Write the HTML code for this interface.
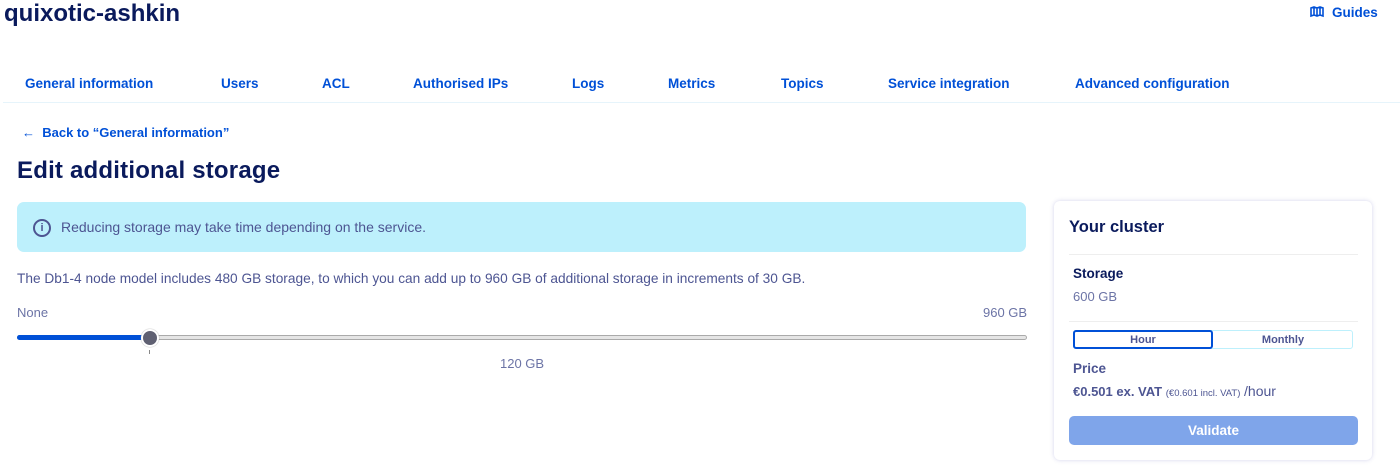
<!DOCTYPE html>
<html><head><meta charset="utf-8"><style>
*{margin:0;padding:0;box-sizing:border-box}
body{width:1400px;height:471px;background:#fff;font-family:"Liberation Sans",sans-serif;color:#4d5592;position:relative;overflow:hidden}
.a{position:absolute;white-space:nowrap}
.t{font-weight:bold;color:#0050d7;font-size:13.5px}
</style></head><body>
<div class="a" style="left:4px;top:0px;font-size:24px;font-weight:bold;color:#0a1a5c">quixotic-ashkin</div>
<div class="a t" style="left:1310px;top:5px;font-size:13.5px">
<svg width="14" height="12" viewBox="0 0 14 12" style="vertical-align:-1px;margin-right:8px"><path d="M1 2v8l3-1 3 1 3-1 3 1V2l-3-1-3 1-3-1z M4 1v8 M7 2v8 M10 1v8" fill="none" stroke="#0050d7" stroke-width="1.6"/></svg>Guides</div>
<div class="a t" style="left:25px;top:76px">General information</div>
<div class="a t" style="left:221px;top:76px">Users</div>
<div class="a t" style="left:322px;top:76px">ACL</div>
<div class="a t" style="left:413px;top:76px">Authorised IPs</div>
<div class="a t" style="left:572px;top:76px">Logs</div>
<div class="a t" style="left:668px;top:76px">Metrics</div>
<div class="a t" style="left:781px;top:76px">Topics</div>
<div class="a t" style="left:888px;top:76px">Service integration</div>
<div class="a t" style="left:1075px;top:76px">Advanced configuration</div>
<div class="a" style="left:3px;top:102px;width:1397px;height:1px;background:#e6f4fb"></div>
<div class="a t" style="left:22px;top:125px;font-size:13px">←&nbsp;&nbsp;Back to “General information”</div>
<div class="a" style="left:17px;top:157px;font-size:24px;font-weight:bold;color:#0a1a5c;letter-spacing:0.2px">Edit additional storage</div>
<div class="a" style="left:17px;top:202px;width:1009px;height:50px;background:#bdf0fc;border-radius:7px"></div>
<div class="a" style="left:33px;top:219px;width:18px;height:18px;border:2px solid #4d5592;border-radius:50%;font-size:11px;font-weight:bold;text-align:center;line-height:14px">i</div>
<div class="a" style="left:61px;top:219px;font-size:14px">Reducing storage may take time depending on the service.</div>
<div class="a" style="left:17px;top:271px;font-size:13.7px">The Db1-4 node model includes 480 GB storage, to which you can add up to 960 GB of additional storage in increments of 30 GB.</div>
<div class="a" style="left:17px;top:305px;font-size:13px;color:#6c74a6">None</div>
<div class="a" style="left:983px;top:305px;font-size:13px;color:#6c74a6">960 GB</div>
<div class="a" style="left:17px;top:335px;width:1010px;height:5px;border:1px solid #aaa;background:#e5e5e5;border-radius:3px"></div>
<div class="a" style="left:17px;top:335px;width:133px;height:5px;background:#0050d7;border-radius:3px"></div>
<div class="a" style="left:141px;top:329px;width:18px;height:18px;border-radius:50%;background:#5f6072;border:2px solid #fff;box-shadow:0 0 1px #888"></div>
<div class="a" style="left:149px;top:350px;width:1px;height:4px;background:#888"></div>
<div class="a" style="left:500px;top:356px;font-size:13px;color:#6c74a6">120 GB</div>
<div class="a" style="left:1054px;top:201px;width:318px;height:259px;border-radius:6px;background:#fff;box-shadow:0 0 4px rgba(80,80,180,.25)"></div>
<div class="a" style="left:1069px;top:218px;font-size:16.5px;font-weight:bold;color:#0a1a5c">Your cluster</div>
<div class="a" style="left:1069px;top:254px;width:289px;height:1px;background:#eee"></div>
<div class="a" style="left:1073px;top:266px;font-size:13.5px;font-weight:bold;color:#0a1a5c">Storage</div>
<div class="a" style="left:1073px;top:289px;font-size:13px;color:#6c74a6">600 GB</div>
<div class="a" style="left:1069px;top:321px;width:289px;height:1px;background:#eee"></div>
<div class="a" style="left:1073px;top:330px;width:280px;height:19px;border:1px solid #bdf0fc;border-radius:3px"></div>
<div class="a" style="left:1073px;top:330px;width:140px;height:19px;border:2px solid #0050d7;border-radius:3px;font-size:11px;font-weight:bold;color:#4d5592;text-align:center;line-height:16px">Hour</div>
<div class="a" style="left:1213px;top:330px;width:140px;height:19px;font-size:11px;font-weight:bold;color:#4d5592;text-align:center;line-height:20px">Monthly</div>
<div class="a" style="left:1073px;top:361px;font-size:13.5px;font-weight:bold">Price</div>
<div class="a" style="left:1073px;top:383px;font-size:13px"><b>€0.501 ex. VAT</b> <span style="font-size:9.5px">(€0.601 incl. VAT)</span> <span style="font-size:14px">/hour</span></div>
<div class="a" style="left:1069px;top:416px;width:289px;height:29px;border-radius:5px;background:#7fa5ea;color:#fff;font-weight:bold;font-size:13.5px;text-align:center;line-height:29px">Validate</div>
</body></html>
